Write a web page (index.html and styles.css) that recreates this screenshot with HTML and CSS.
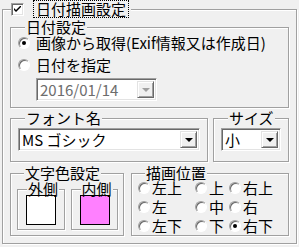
FILE: index.html
```html
<!DOCTYPE html>
<html lang="ja">
<head>
<meta charset="utf-8">
<link rel="stylesheet" href="styles.css">
</head>
<body>
<fieldset class="grp outer">
  <legend class="outer-legend">
    <span class="chk"><svg width="7" height="7" viewBox="0 0 7 7"><path d="M0 2 L0 4 L2 6 L7 1 L7 -1 L2 4 Z" fill="#000"/></svg></span>
    <span class="focus">日付描画設定</span>
  </legend>

  <fieldset class="grp date-grp">
    <legend>日付設定</legend>
    <div class="opt"><span class="radio on"></span><span>画像から取得(Exif情報又は作成日)</span></div>
    <div class="opt opt2"><span class="radio"></span><span>日付を指定</span></div>
    <div class="combo disabled date-combo">
      <span class="val">2016/01/14</span>
      <span class="btn"><span class="arrow"></span></span>
    </div>
  </fieldset>

  <div class="row2">
    <fieldset class="grp font-grp">
      <legend>フォント名</legend>
      <div class="combo font-combo">
        <span class="val">MS ゴシック</span>
        <span class="btn"><span class="arrow"></span></span>
      </div>
    </fieldset>
    <fieldset class="grp size-grp">
      <legend>サイズ</legend>
      <div class="combo size-combo">
        <span class="val">小</span>
        <span class="btn"><span class="arrow"></span></span>
      </div>
    </fieldset>
  </div>

  <div class="row3">
    <fieldset class="grp color-grp">
      <legend>文字色設定</legend>
      <div class="swatches">
        <fieldset class="grp sw-grp">
          <legend>外側</legend>
          <div class="swatch sw-white"></div>
        </fieldset>
        <fieldset class="grp sw-grp">
          <legend>内側</legend>
          <div class="swatch sw-pink"></div>
        </fieldset>
      </div>
    </fieldset>
    <fieldset class="grp pos-grp">
      <legend>描画位置</legend>
      <div class="pos-grid">
        <div class="pos"><span class="radio"></span><span>左上</span></div>
        <div class="pos"><span class="radio"></span><span>上</span></div>
        <div class="pos"><span class="radio"></span><span>右上</span></div>
        <div class="pos"><span class="radio"></span><span>左</span></div>
        <div class="pos"><span class="radio"></span><span>中</span></div>
        <div class="pos"><span class="radio"></span><span>右</span></div>
        <div class="pos"><span class="radio"></span><span>左下</span></div>
        <div class="pos"><span class="radio"></span><span>下</span></div>
        <div class="pos"><span class="radio on"></span><span>右下</span></div>
      </div>
    </fieldset>
  </div>
</fieldset>
</body>
</html>
```

FILE: styles.css
```css
* { box-sizing: border-box; }
html, body { margin: 0; padding: 0; }
body {
  width: 299px;
  height: 247px;
  overflow: hidden;
  background: #f0f0f0;
  color: #000;
  font-family: "Noto Sans CJK JP", "MS Gothic", sans-serif;
  font-size: 15px;
  line-height: 16px;
}

.grp {
  margin: 0;
  padding: 0;
  min-width: 0;
  border: 1px solid #a0a0a0;
  box-shadow: inset 1px 1px 0 #fff, 1px 1px 0 #fff;
}
.grp > legend {
  padding: 0 1px;
  margin-left: 7px;
  height: 16px;
  line-height: 16px;
  white-space: nowrap;
  background: #f0f0f0;
}

/* outer group */
.outer {
  margin: 0 0 0 2px;
  width: 295px;
  height: 244px;
  padding: 1px 7px 0 7px;
}
.outer-legend.outer-legend {
  margin-left: 1px;
  padding: 0 2px 0 0;
  height: 18px;
  display: flex;
  align-items: center;
}
.chk {
  width: 13px;
  height: 13px;
  background: #fff;
  border: 1px solid;
  border-color: #a0a0a0 #fff #fff #a0a0a0;
  box-shadow: inset 1px 1px 0 #696969, inset -1px -1px 0 #e3e3e3;
  display: flex;
  align-items: center;
  justify-content: center;
}
.chk svg { display: block; }
.focus {
  margin-left: 9px;
  padding: 0 3px;
  height: 18px;
  line-height: 18px;
  outline: 1px dotted #000;
  outline-offset: -1px;
}

/* date group */
.date-grp {
  padding: 0 7px 6px 7px;
}
.opt {
  display: flex;
  align-items: center;
  height: 16px;
  gap: 6px;
  white-space: nowrap;
}
.opt2 { margin-top: 6px; }

.radio {
  flex: none;
  width: 12px;
  height: 12px;
  border-radius: 50%;
  background: #fff;
  border: 1px solid;
  border-color: #a0a0a0 #fff #fff #a0a0a0;
  box-shadow: inset 1px 1px 0 #696969;
  display: flex;
  align-items: center;
  justify-content: center;
}
.radio.on::after {
  content: "";
  width: 4px;
  height: 4px;
  border-radius: 50%;
  background: #000;
}

/* combo boxes */
.combo {
  display: flex;
  align-items: stretch;
  height: 23px;
  background: #fff;
  border: 1px solid;
  border-color: #a0a0a0 #fff #fff #a0a0a0;
  box-shadow: inset 1px 1px 0 #696969, inset -1px -1px 0 #e3e3e3;
  padding: 2px;
}
.combo .val {
  flex: 1;
  padding-left: 1px;
  line-height: 17px;
  white-space: nowrap;
}
.combo .btn {
  flex: none;
  width: 17px;
  background: #f0f0f0;
  border: 1px solid;
  border-color: #e3e3e3 #696969 #696969 #e3e3e3;
  box-shadow: inset 1px 1px 0 #fff, inset -1px -1px 0 #a0a0a0;
  display: flex;
  align-items: center;
  justify-content: center;
}
.arrow {
  width: 0;
  height: 0;
  border-left: 4px solid transparent;
  border-right: 4px solid transparent;
  border-top: 4px solid #000;
}
.date-combo {
  margin: 5px 0 0 18px;
  width: 121px;
}
.combo.disabled .val { color: #6d6d6d; }
.combo.disabled .arrow { border-top-color: #a0a0a0; }

/* font & size row */
.row2 {
  display: flex;
  gap: 5px;
  margin-top: 2px;
}
.font-grp {
  width: 198px;
  padding: 2px 7px 10px 7px;
}
.size-grp {
  flex: 1;
  padding: 2px 7px 10px 7px;
}

/* color & position row */
.row3 {
  display: flex;
  gap: 7px;
  margin-top: 3px;
}
.color-grp {
  width: 114px;
  padding: 0 5px 5px 6px;
}
.swatches {
  display: flex;
  gap: 6px;
}
.sw-grp {
  width: 48px;
  padding: 0 8px 4px 8px;
}
.sw-grp > legend { margin-left: 1px; }
.swatch {
  width: 30px;
  height: 30px;
  margin-top: -2px;
  border: 1px solid #000;
}
.sw-white { background: #fff; }
.sw-pink { background: #ff80ff; }

.pos-grp {
  flex: 1;
  padding: 0 2px 0 6px;
}
.pos-grid {
  display: grid;
  grid-template-columns: 57px 34px 1fr;
  grid-auto-rows: 18px;
  row-gap: 1px;
  margin-top: -2px;
}
.pos {
  display: flex;
  align-items: center;
  gap: 2px;
  white-space: nowrap;
}
```
